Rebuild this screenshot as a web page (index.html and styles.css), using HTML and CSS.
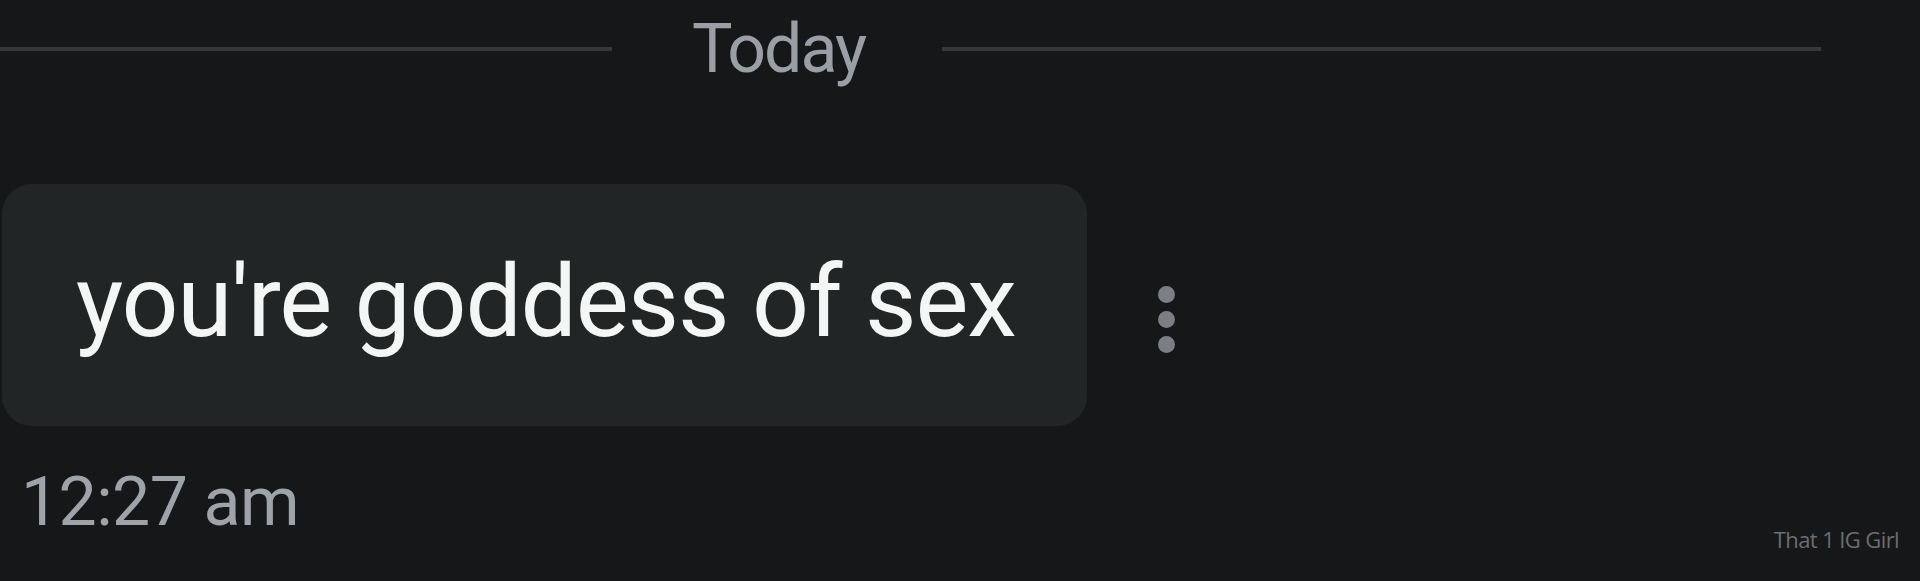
FILE: index.html
```html
<!DOCTYPE html>
<html>
<head>
<meta charset="utf-8">
<link rel="stylesheet" href="styles.css">
</head>
<body>
<div class="screen">
  <div class="divider">
    <div class="line line-left"></div>
    <div class="day">Today</div>
    <div class="line line-right"></div>
  </div>
  <div class="msg-row">
    <div class="bubble"><span class="msg-text">you're goddess of sex</span></div>
    <div class="more"><span class="dot"></span><span class="dot"></span><span class="dot"></span></div>
  </div>
  <div class="time">12:27 am</div>
  <div class="watermark">That 1 IG Girl</div>
</div>
</body>
</html>
```
FILE: styles.css
```css
html, body {
  margin: 0;
  padding: 0;
  background: #161719;
}
.screen {
  position: relative;
  width: 1920px;
  height: 581px;
  overflow: hidden;
  background: #161719;
  font-family: Roboto, "Liberation Sans", sans-serif;
}
.divider {
  display: flex;
  align-items: center;
  height: 98px;
  padding-right: 99px;
}
.line {
  height: 4px;
  background: #37383a;
}
.line-left {
  flex: 0 0 612px;
}
.line-right {
  flex: 1 1 auto;
}
.day {
  margin: 0 77px 0 80px;
  font-size: 68px;
  letter-spacing: -2px;
  color: #9a9fa5;
  line-height: 1;
}
.msg-row {
  display: flex;
  align-items: center;
  margin-top: 86px;
  padding-left: 2px;
}
.bubble {
  width: 1085px;
  height: 242px;
  box-sizing: border-box;
  background: #222526;
  border-radius: 30px;
  display: flex;
  align-items: center;
  padding-left: 74px;
}
.msg-text {
  font-size: 100px;
  letter-spacing: -1.2px;
  color: #f4f5f5;
  line-height: 1;
  margin-top: -6px;
}
.more {
  display: flex;
  flex-direction: column;
  gap: 8px;
  margin-left: 71px;
  margin-top: 28px;
}
.dot {
  width: 17px;
  height: 17px;
  border-radius: 50%;
  background: #7b7e82;
}
.time {
  margin: 42px 0 0 21px;
  font-size: 68px;
  letter-spacing: -0.6px;
  color: #9ea3a9;
  line-height: 1;
}
.watermark {
  position: absolute;
  right: 21px;
  bottom: 27px;
  font-family: "Open Sans", "DejaVu Sans", sans-serif;
  font-size: 22px;
  letter-spacing: -0.6px;
  color: #6c6d6f;
}
```
